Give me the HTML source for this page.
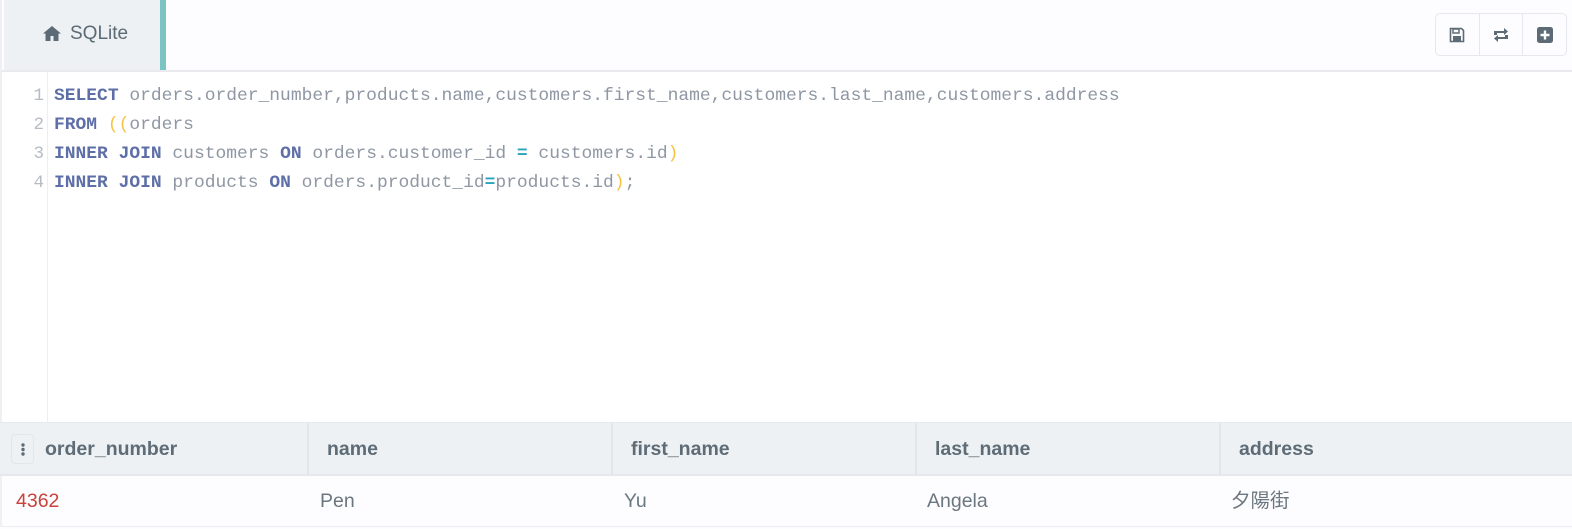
<!DOCTYPE html>
<html><head><meta charset="utf-8"><style>
*{margin:0;padding:0;box-sizing:border-box}
body{width:1572px;height:529px;background:#fdfcfe;font-family:"Liberation Sans",sans-serif;position:relative;overflow:hidden}
.top{position:absolute;left:0;top:0;width:1572px;height:72px;background:#fdfcfe;border-bottom:2px solid #e8eaee;border-left:2px solid #eef0f2}
.tab{position:absolute;left:2px;top:0;width:156px;height:70px;background:#edf1f3;color:#5c6b76;font-size:19px;line-height:68px}
.tab span{position:absolute;left:66px;top:0}
.bar{position:absolute;left:158px;top:0;width:6px;height:70px;background:#7cc3c4}
.btns{position:absolute;left:1433px;top:13px;width:132px;height:43px;border:1px solid #e6e8ec;border-radius:5px;background:#fdfcfe;display:flex}
.btns div{flex:1;border-right:1px solid #e6e8ec;display:flex;align-items:center;justify-content:center}
.btns div:last-child{border-right:none}
.editor{position:absolute;left:0;top:72px;width:1572px;height:350px;background:#fff;border-left:2px solid #eef0f2}
.gutter{position:absolute;left:0;top:0;width:46px;height:350px;background:#fff;border-right:1px solid #eceef1}
.ln{position:absolute;left:0;width:42px;text-align:right;color:#b5bcc3;font:17.5px/29px "Liberation Mono",monospace}
.code{position:absolute;left:52px;font:17.95px/29px "Liberation Mono",monospace;color:#8e97a3;white-space:pre}
.k{color:#5e6fa8;font-weight:bold}.p{color:#f5c444}.o{color:#2aa4bd;font-weight:bold}
.thead{position:absolute;left:0;top:422px;width:1572px;height:54px;background:#edf1f3;border-top:1px solid #e6e9ec;border-bottom:2px solid #e6e9ec}
.th{position:absolute;top:0;height:52px;line-height:52px;font-weight:bold;color:#5d6c77;font-size:19.5px;border-left:2px solid #e4e7ea}
.row{position:absolute;left:0;top:476px;width:1572px;height:51px;background:#fdfcfe;border-bottom:1px solid #eceef1;border-left:2px solid #eef0f2}
.td{position:absolute;top:0;line-height:50px;font-size:19.5px;color:#6b7780;font-family:"Liberation Sans","Noto Sans CJK TC",sans-serif}
.menu{position:absolute;left:11px;top:11px;width:23px;height:30px;border:1px solid #e3e6e9;border-radius:4px}
</style></head><body>
<div class="top">
 <div class="tab"><svg style="position:absolute;left:39px;top:26px" width="18" height="15" viewBox="0 0 18 15"><path d="M9 0L0 7.5h2.5V15h5v-5h3v5h5V7.5H18L9 0z" fill="#5c6b76"/></svg><span>SQLite</span></div>
 <div class="bar"></div>
 <div class="btns">
  <div><svg width="16" height="16" viewBox="0 0 16 16"><path d="M1.5 1.5h11l2 2v11h-13z" fill="none" stroke="#5c6b76" stroke-width="1.6"/><rect x="4" y="2" width="6" height="4" fill="none" stroke="#5c6b76" stroke-width="1.5"/><rect x="4" y="9" width="8" height="5" fill="#5c6b76"/></svg></div>
  <div><svg width="20" height="14" viewBox="0 0 20 14"><path d="M3 5V3h10V0l4 3.5-4 3.5V5H6v2H3zM17 9v2H7v3l-4-3.5L7 7v2h7V7h3z" fill="#5c6b76"/></svg></div>
  <div><svg width="16" height="16" viewBox="0 0 16 16"><rect width="16" height="16" rx="2.5" fill="#5c6b76"/><path d="M8 3.5v9M3.5 8h9" stroke="#fff" stroke-width="2.4"/></svg></div>
 </div>
</div>
<div class="editor">
 <div class="gutter">
  <div class="ln" style="top:10px">1</div><div class="ln" style="top:39px">2</div><div class="ln" style="top:68px">3</div><div class="ln" style="top:97px">4</div>
 </div>
 <div class="code" style="top:10px"><span class="k">SELECT</span> orders.order_number,products.name,customers.first_name,customers.last_name,customers.address</div>
 <div class="code" style="top:39px"><span class="k">FROM</span> <span class="p">((</span>orders</div>
 <div class="code" style="top:68px"><span class="k">INNER JOIN</span> customers <span class="k">ON</span> orders.customer_id <span class="o">=</span> customers.id<span class="p">)</span></div>
 <div class="code" style="top:97px"><span class="k">INNER JOIN</span> products <span class="k">ON</span> orders.product_id<span class="o">=</span>products.id<span class="p">)</span>;</div>
</div>
<div class="thead">
 <div class="menu"><svg style="position:absolute;left:9px;top:8px" width="4" height="13"><circle cx="2" cy="2" r="1.7" fill="#5d6c77"/><circle cx="2" cy="6.5" r="1.7" fill="#5d6c77"/><circle cx="2" cy="11" r="1.7" fill="#5d6c77"/></svg></div>
 <div class="th" style="left:45px;border-left:none">order_number</div>
 <div class="th" style="left:307px;padding-left:18px;width:305px">name</div>
 <div class="th" style="left:611px;padding-left:18px;width:305px">first_name</div>
 <div class="th" style="left:915px;padding-left:18px;width:305px">last_name</div>
 <div class="th" style="left:1219px;padding-left:18px;width:353px">address</div>
</div>
<div class="row">
 <div class="td" style="left:14px;color:#c9423a">4362</div>
 <div class="td" style="left:318px">Pen</div>
 <div class="td" style="left:622px">Yu</div>
 <div class="td" style="left:925px">Angela</div>
 <div class="td" style="left:1229px">夕陽街</div>
</div>
</body></html>
